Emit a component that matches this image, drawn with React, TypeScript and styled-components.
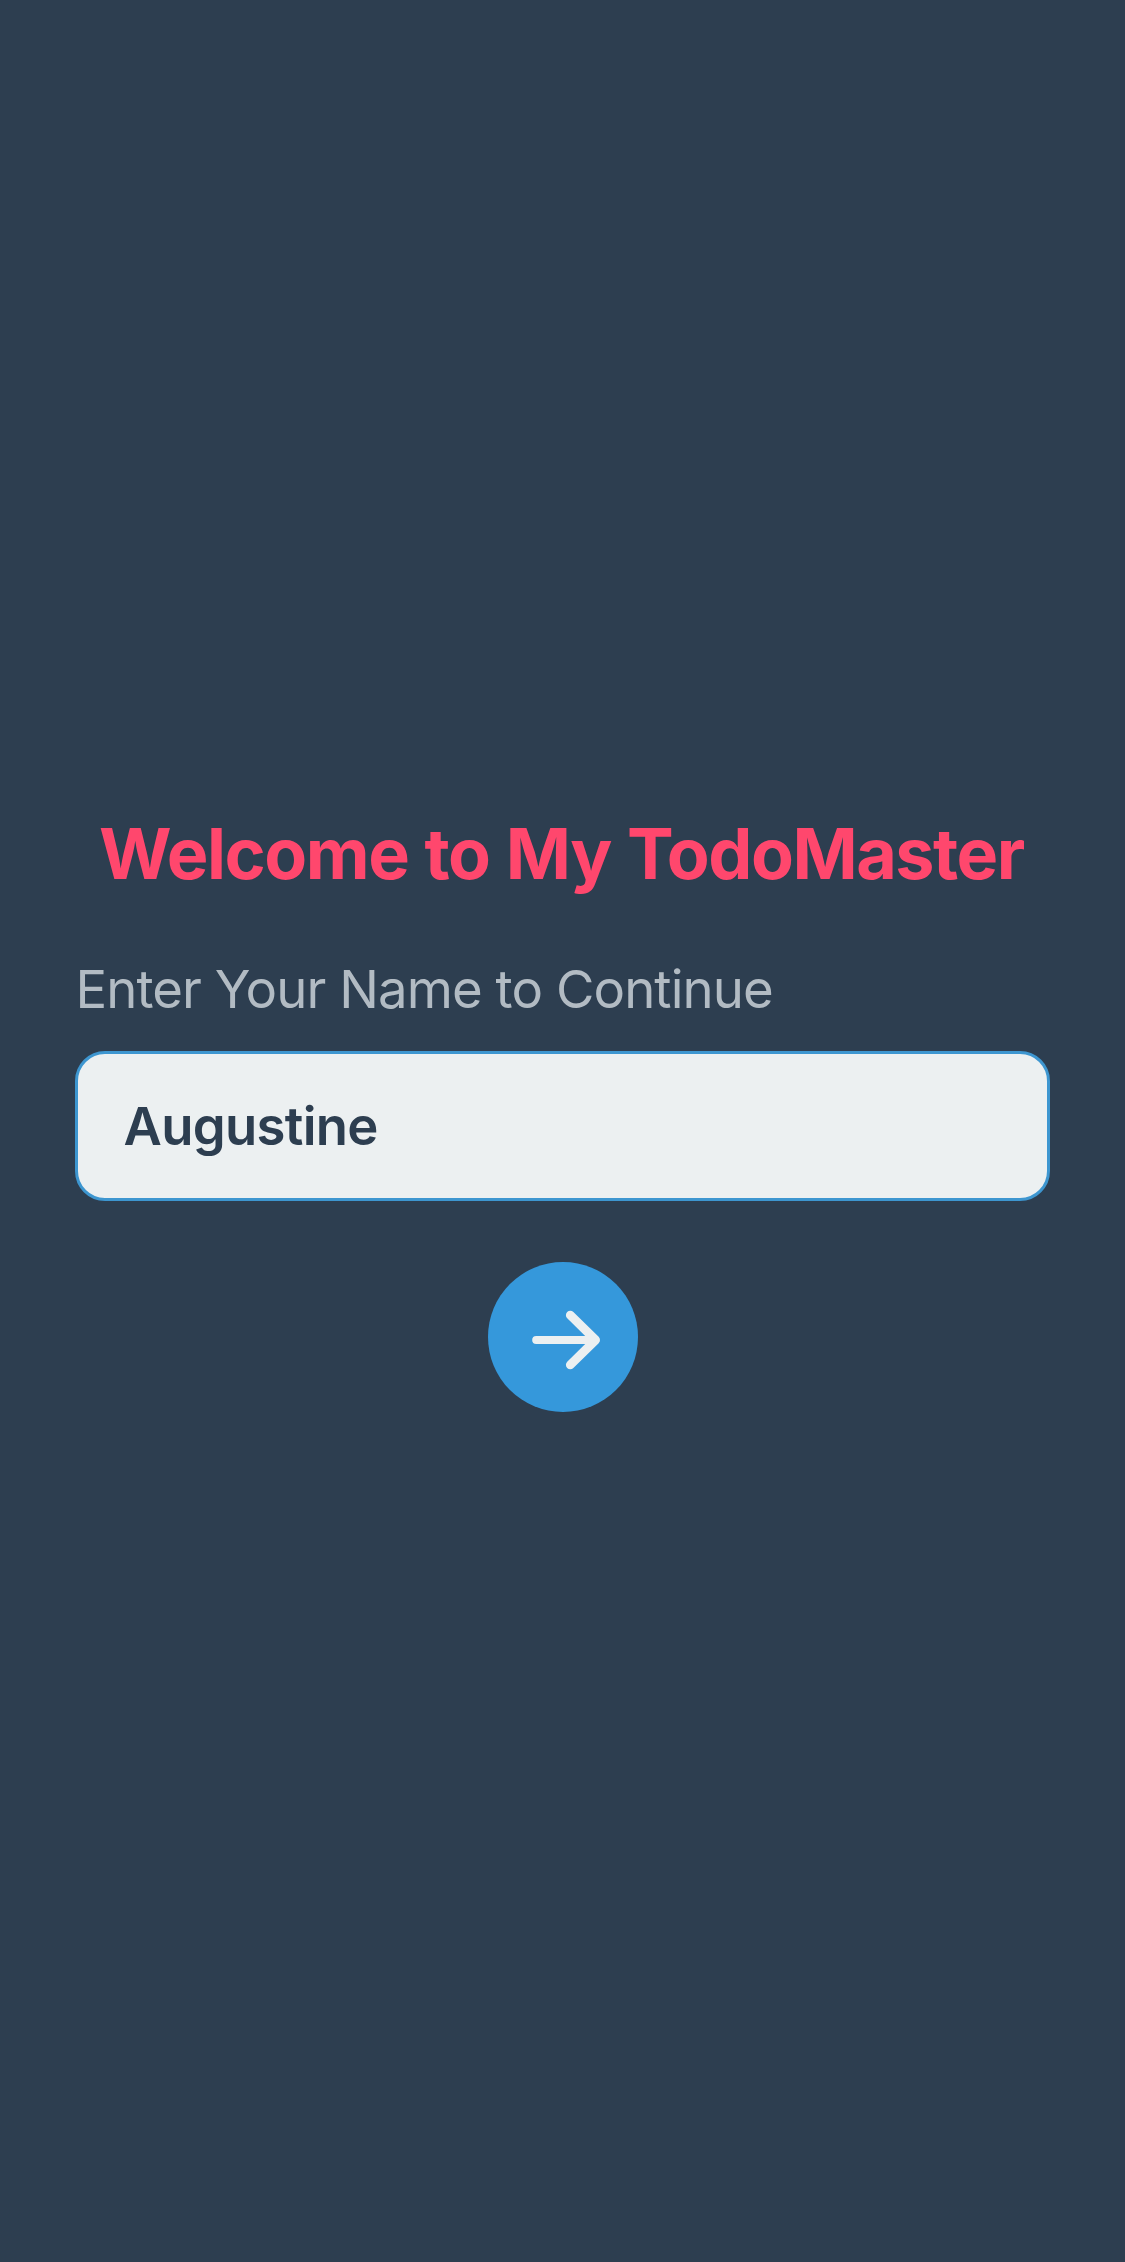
import React, { useState } from 'react';
import styled, { createGlobalStyle } from 'styled-components';

const GlobalStyle = createGlobalStyle`
  *, *::before, *::after { box-sizing: border-box; }
  body { margin: 0; background: #2d3e50; }
`;

const Screen = styled.main`
  display: flex;
  flex-direction: column;
  align-items: center;
  min-height: 2262px;
  padding: 812px 75px 0;
  background: #2d3e50;
  font-family: Inter, "Liberation Sans", sans-serif;
`;

const Title = styled.h1`
  margin: 0 0 61px;
  padding-right: 2px;
  font-size: 70px;
  line-height: 84px;
  font-weight: 700;
  letter-spacing: -1.45px;
  word-spacing: 1px;
  white-space: nowrap;
  color: #ff476d;
`;

const Form = styled.form`
  display: flex;
  flex-direction: column;
  align-items: center;
  width: 100%;
`;

const Label = styled.label`
  align-self: flex-start;
  margin-bottom: 30px;
  padding-left: 0.5px;
  font-size: 52.7px;
  line-height: 64px;
  font-weight: 400;
  letter-spacing: -0.93px;
  white-space: nowrap;
  color: #b2bbc3;
`;

const NameInput = styled.input`
  width: 100%;
  height: 150px;
  margin: 0 0 61px;
  padding: 0 45.5px;
  border: 3px solid #3d96d0;
  border-radius: 30px;
  outline: none;
  background: #ecf0f1;
  color: #2d3e50;
  font-family: inherit;
  font-size: 52.7px;
  font-weight: 600;
  letter-spacing: -0.7px;
`;

const NextButton = styled.button`
  display: flex;
  align-items: center;
  justify-content: center;
  width: 150px;
  height: 150px;
  padding: 0;
  border: 0;
  border-radius: 50%;
  background: #3598db;
`;

const ArrowIcon = styled.svg`
  display: block;
  width: 150px;
  height: 150px;
  fill: none;
  stroke: #ecf0f1;
  stroke-linecap: round;
  stroke-linejoin: round;
`;

export default function App() {
  const [name, setName] = useState('Augustine');
  return (
    <Screen>
      <GlobalStyle />
      <Title>Welcome to My TodoMaster</Title>
      <Form onSubmit={(event) => event.preventDefault()}>
        <Label htmlFor="name">Enter Your Name to Continue</Label>
        <NameInput id="name" value={name} onChange={(event) => setName(event.target.value)} />
        <NextButton type="submit" aria-label="Continue">
          <ArrowIcon viewBox="0 0 150 150">
            <path strokeWidth="8" d="M48.2 78H107" />
            <path strokeWidth="8.8" d="M82.3 53.2L107.6 78L82.3 102.8" />
          </ArrowIcon>
        </NextButton>
      </Form>
    </Screen>
  );
}
